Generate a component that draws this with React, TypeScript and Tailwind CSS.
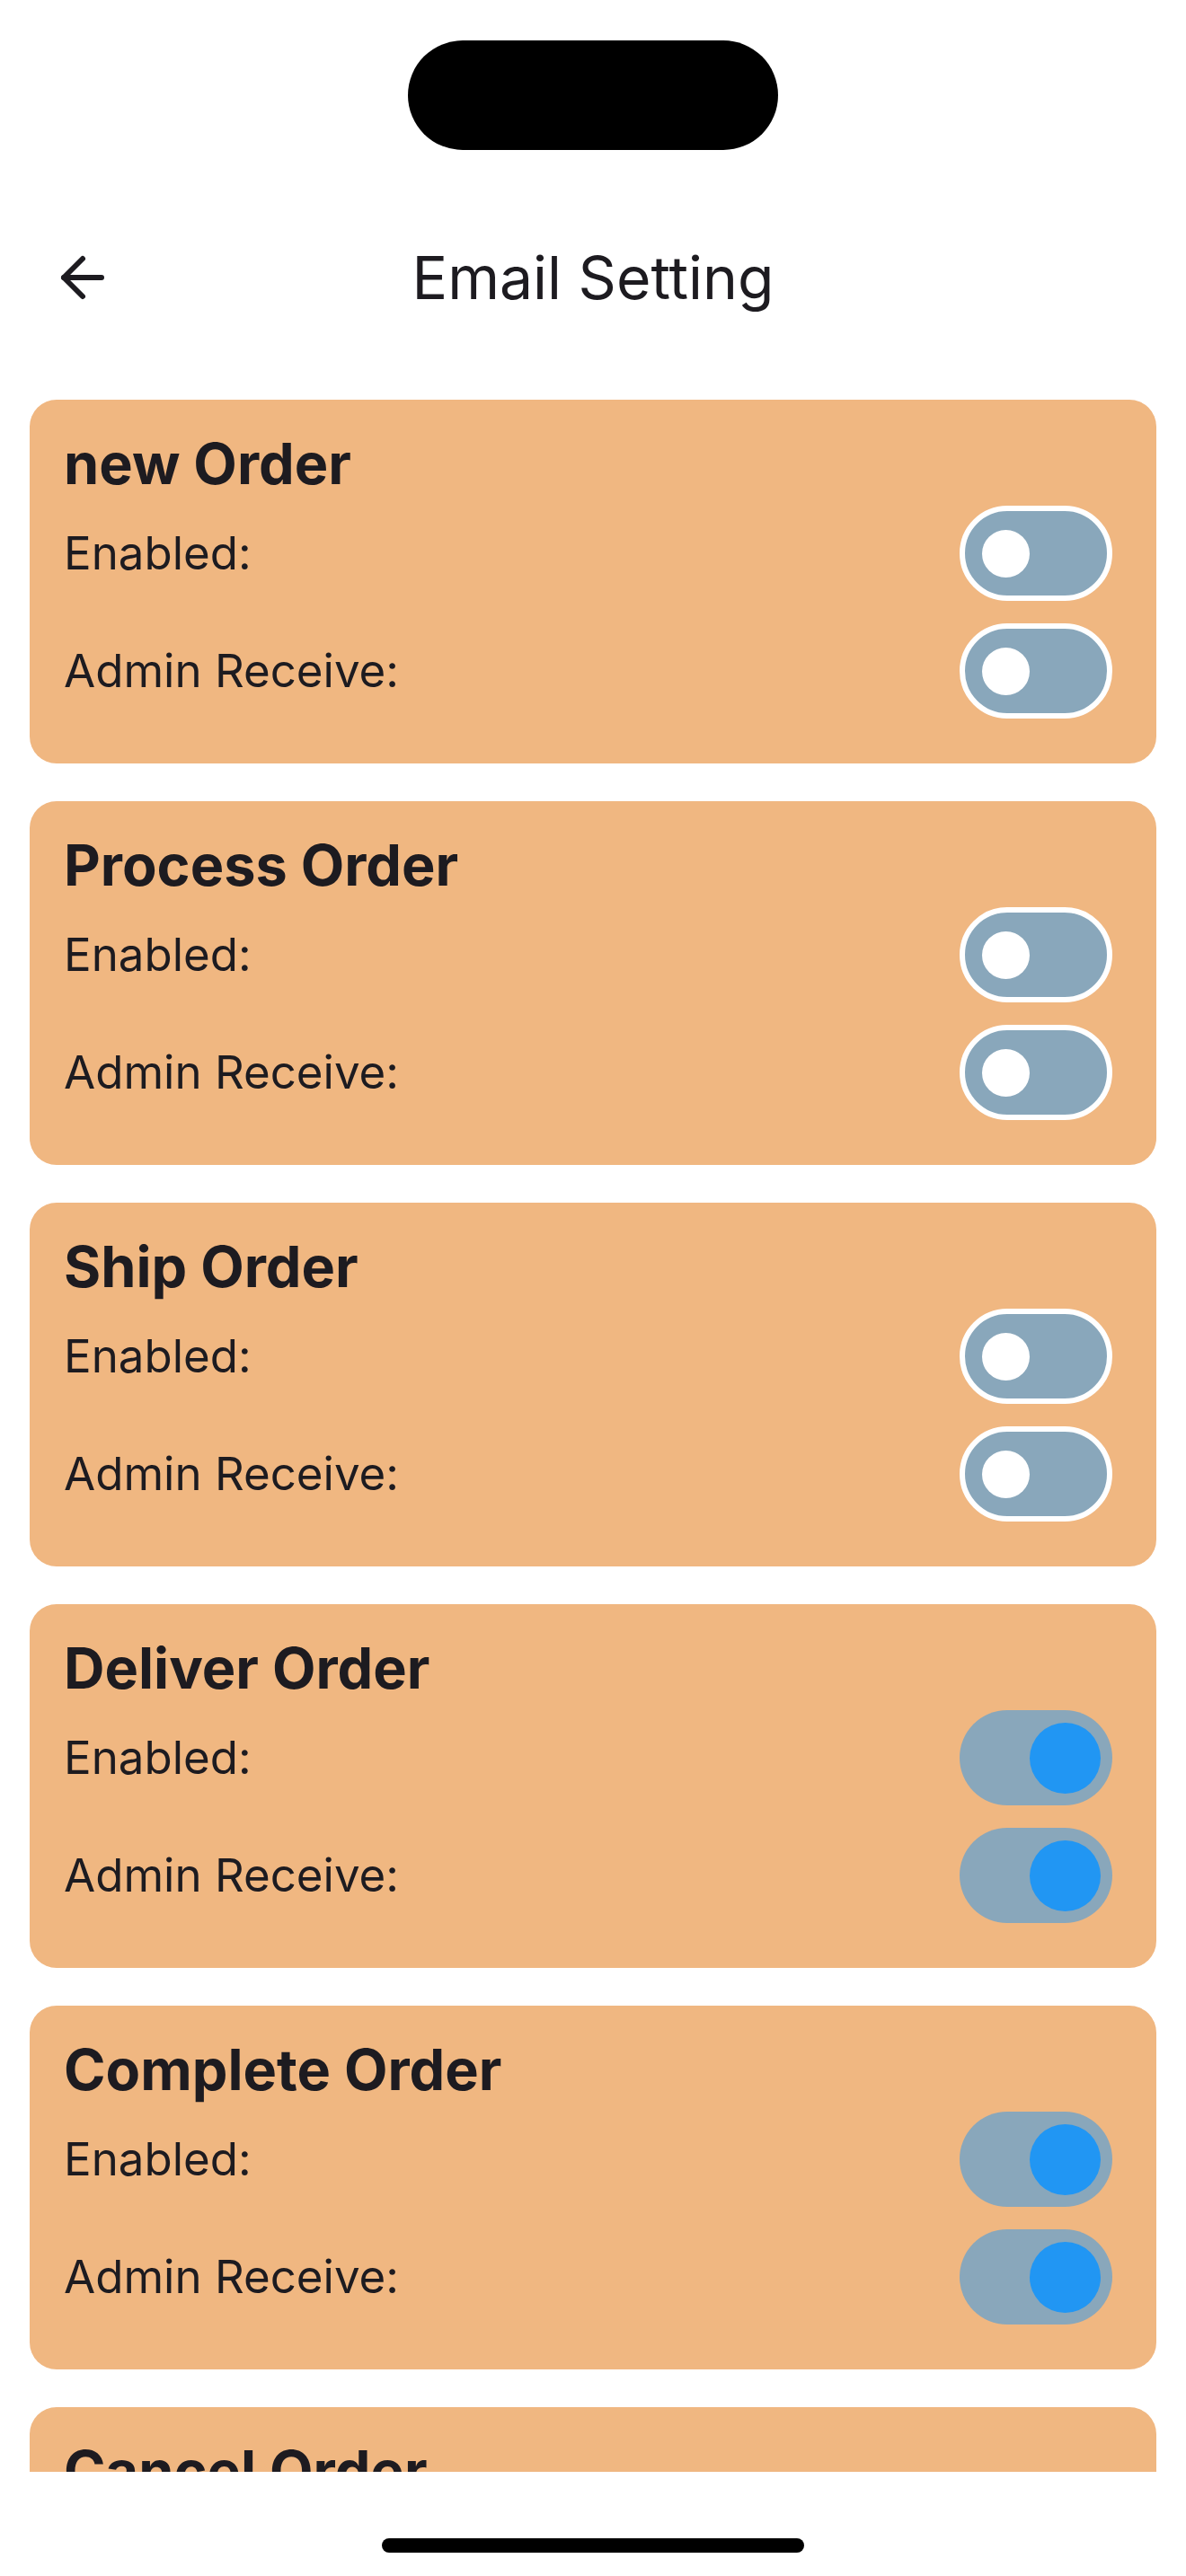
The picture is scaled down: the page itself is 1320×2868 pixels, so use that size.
import React, { useState } from 'react';
import { ArrowLeft } from 'lucide-react';

interface OrderSetting {
  name: string;
  enabled: boolean;
  adminReceive: boolean;
}

const initialSettings: OrderSetting[] = [
  { name: 'new Order', enabled: false, adminReceive: false },
  { name: 'Process Order', enabled: false, adminReceive: false },
  { name: 'Ship Order', enabled: false, adminReceive: false },
  { name: 'Deliver Order', enabled: true, adminReceive: true },
  { name: 'Complete Order', enabled: true, adminReceive: true },
  { name: 'Cancel Order', enabled: false, adminReceive: false },
];

const Toggle: React.FC<{ on: boolean; onChange: () => void }> = ({ on, onChange }) => (
  <button
    onClick={onChange}
    className={`w-[170px] h-[106px] rounded-full bg-[#89a7bb] flex items-center shrink-0 ${
      on ? 'justify-end pr-[13px]' : 'border-[6px] border-white pl-[19px]'
    }`}
  >
    {on ? (
      <span className="w-[79px] h-[79px] rounded-full bg-[#2196f3]" />
    ) : (
      <span className="w-[53px] h-[53px] rounded-full bg-white" />
    )}
  </button>
);

const Row: React.FC<{ label: string; on: boolean; onChange: () => void }> = ({ label, on, onChange }) => (
  <div className="flex items-center justify-between h-[106px]">
    <span className="text-[51px] text-[#1d1b20]">{label}</span>
    <Toggle on={on} onChange={onChange} />
  </div>
);

export default function App() {
  const [settings, setSettings] = useState(initialSettings);

  const flip = (i: number, key: 'enabled' | 'adminReceive') => {
    setSettings(prev => prev.map((s, idx) => (idx === i ? { ...s, [key]: !s[key] } : s)));
  };

  return (
    <div
      className="w-[1320px] h-[2868px] bg-white flex flex-col overflow-hidden"
      style={{ fontFamily: 'Inter, "Noto Sans", sans-serif' }}
    >
      {/* status bar / island */}
      <div className="pt-[45px] flex justify-center">
        <div className="w-[412px] h-[122px] rounded-full bg-black" />
      </div>

      {/* App bar */}
      <div className="mt-[58px] h-[168px] grid grid-cols-[1fr_auto_1fr] items-center">
        <div className="pl-[56px]">
          <button className="w-[72px] h-[72px] flex items-center justify-center text-[#1d1b20]">
            <ArrowLeft size={72} strokeWidth={2} />
          </button>
        </div>
        <h1 className="text-[66px] text-[#1d1b20] font-normal">Email Setting</h1>
        <div />
      </div>

      {/* List */}
      <div className="flex-1 overflow-hidden px-[33px] pt-[52px]">
        <div className="flex flex-col gap-[42px]">
          {settings.map((s, i) => (
            <div key={s.name} className="bg-[#f0b781] rounded-[30px] pt-[31px] pb-[50px] pl-[38px] pr-[49px]">
              <h2 className="text-[63px] leading-[80px] font-bold text-[#1d1b20]">{s.name}</h2>
              <div className="mt-[7px] flex flex-col gap-[25px]">
                <Row label="Enabled:" on={s.enabled} onChange={() => flip(i, 'enabled')} />
                <Row label="Admin Receive:" on={s.adminReceive} onChange={() => flip(i, 'adminReceive')} />
              </div>
            </div>
          ))}
        </div>
      </div>

      {/* home indicator */}
      <div className="h-[116px] pt-[74px] flex justify-center shrink-0">
        <div className="w-[470px] h-[16px] rounded-full bg-black" />
      </div>
    </div>
  );
}
